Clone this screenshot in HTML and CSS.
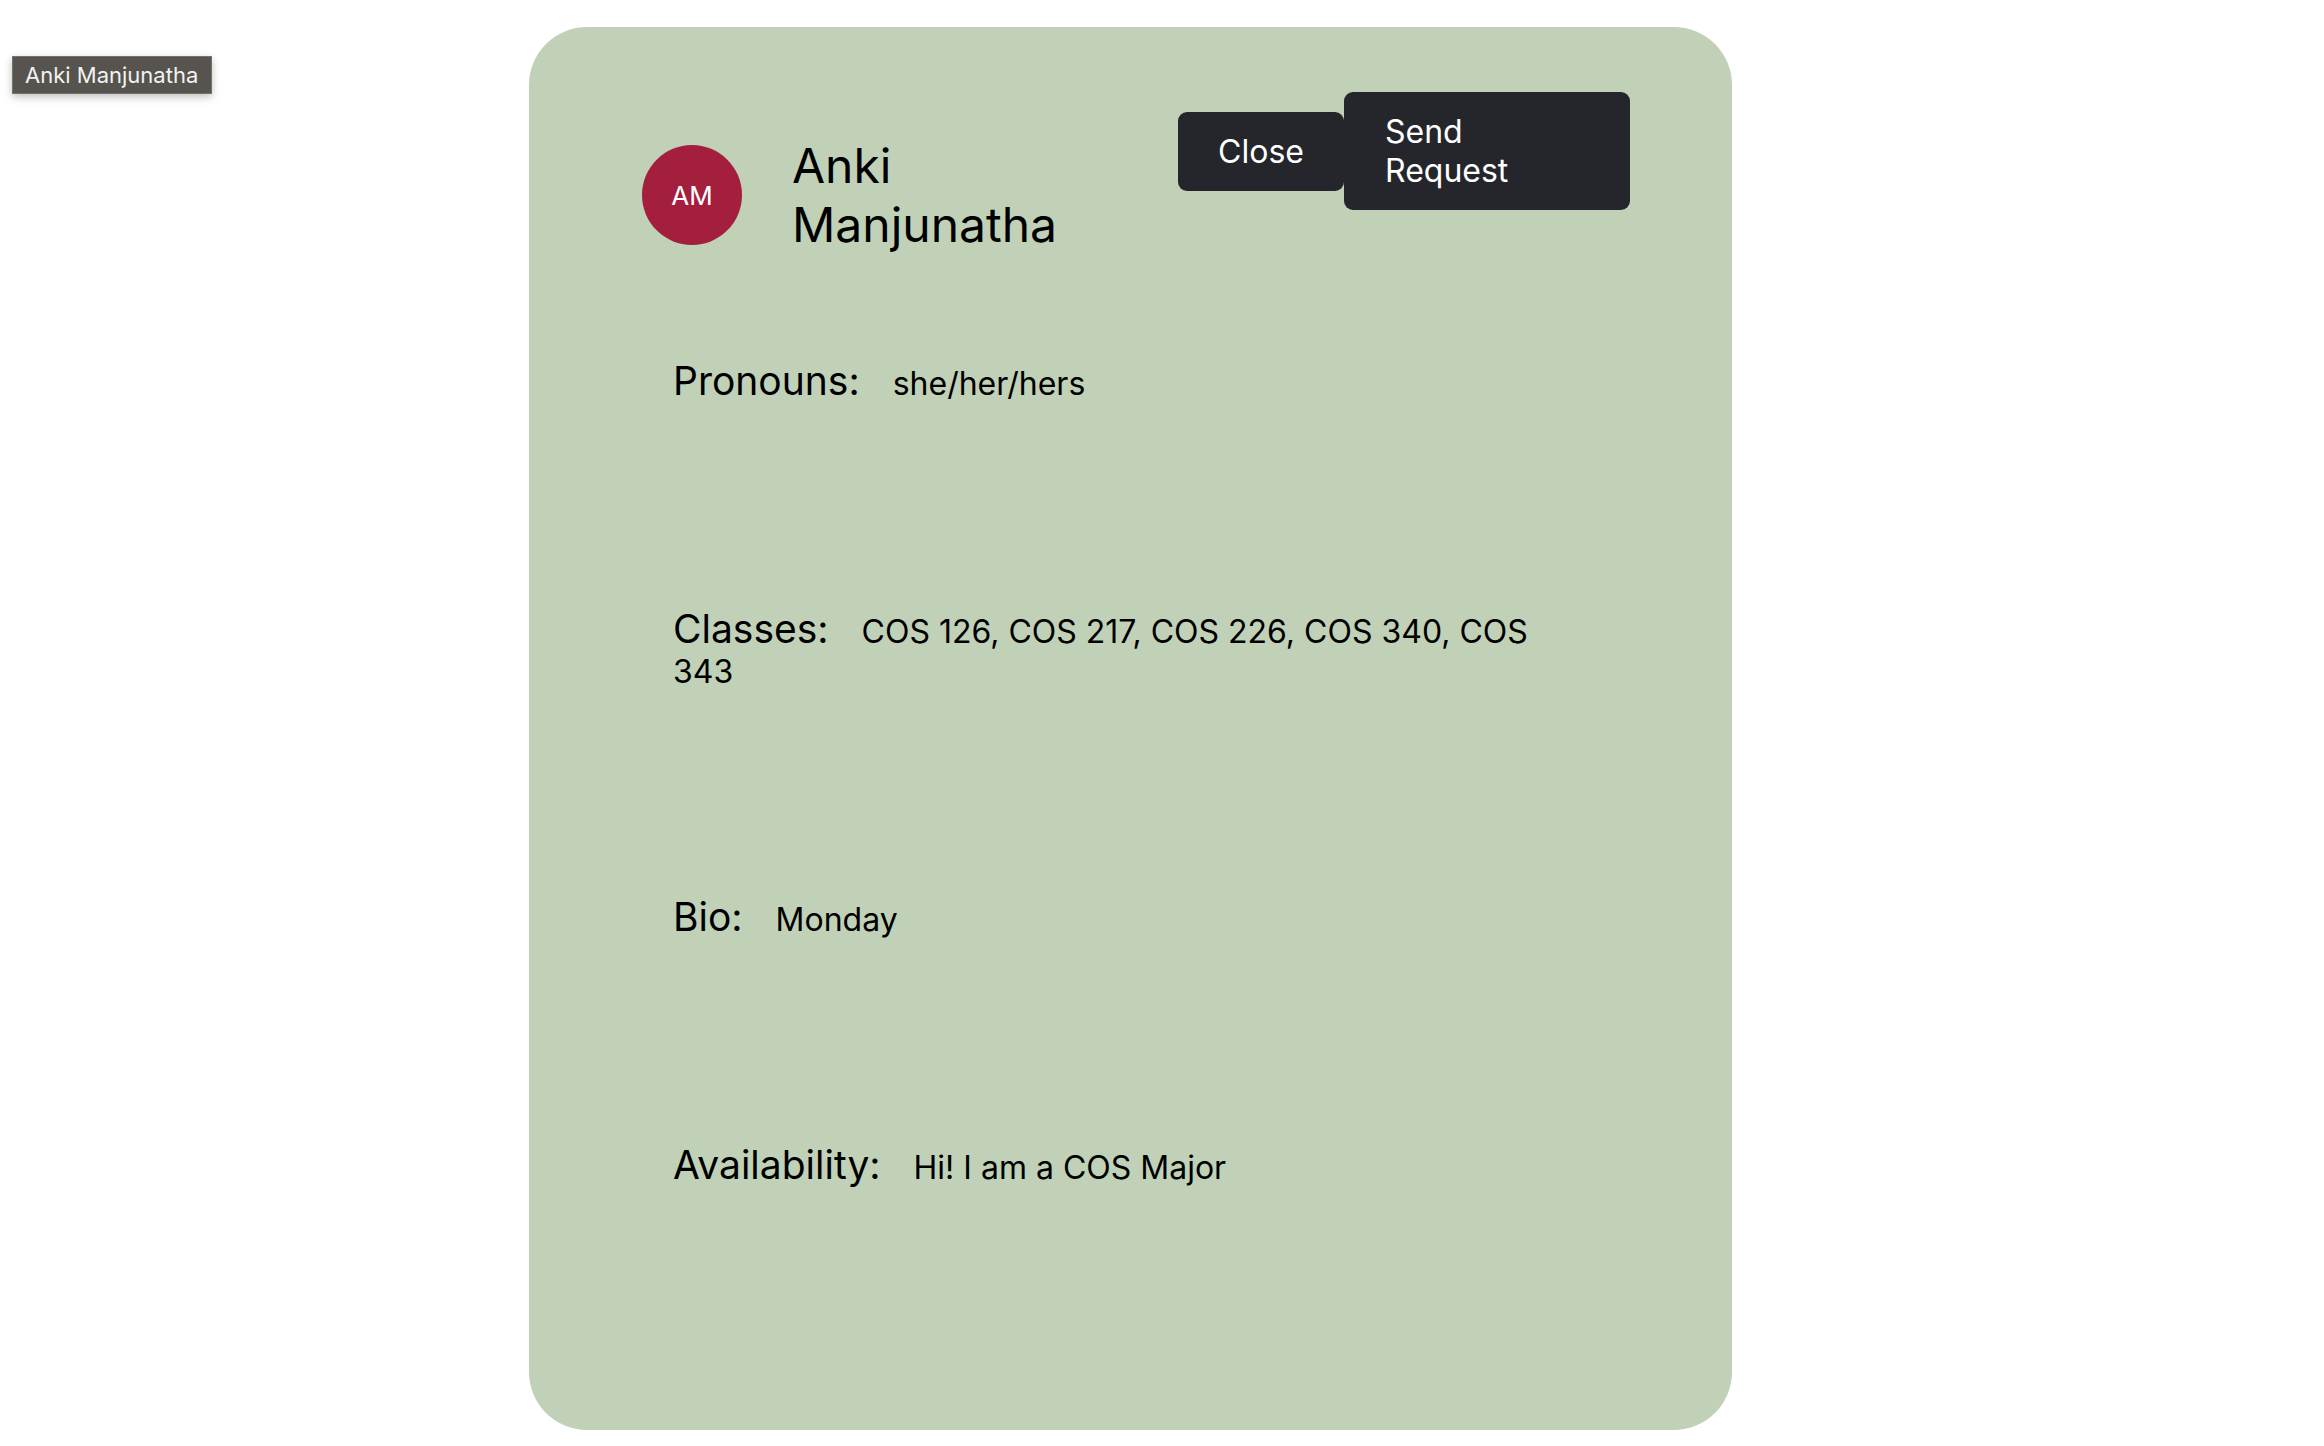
FILE: index.html
```html
<!DOCTYPE html>
<html lang="en">
<head>
<meta charset="utf-8">
<title>Profile</title>
<link rel="stylesheet" href="styles.css">
</head>
<body>
<div class="tooltip">Anki Manjunatha</div>
<div class="card">
  <div class="header">
    <div class="identity">
      <div class="avatar">AM</div>
      <div class="name">Anki Manjunatha</div>
    </div>
    <div class="actions">
      <button class="btn btn-close">Close</button>
      <button class="btn btn-send">Send Request</button>
    </div>
  </div>
  <div class="fields">
    <p class="field"><span class="label">Pronouns:</span> <span class="value">she/her/hers</span></p>
    <p class="field"><span class="label">Classes:</span> <span class="value">COS 126, COS 217, COS 226, COS 340, COS 343</span></p>
    <p class="field"><span class="label">Bio:</span> <span class="value">Monday</span></p>
    <p class="field"><span class="label">Availability:</span> <span class="value">Hi! I am a COS Major</span></p>
  </div>
</div>
</body>
</html>
```

FILE: styles.css
```css
html, body {
  margin: 0;
  padding: 0;
  background: #ffffff;
  font-family: Inter, "Noto Sans", "Liberation Sans", sans-serif;
  color: #000;
}

body {
  position: relative;
  padding-top: 27px;
}

.tooltip {
  position: absolute;
  left: 12px;
  top: 56px;
  width: 200px;
  height: 38px;
  box-sizing: border-box;
  background: #57534e;
  border: 1px solid #75716c;
  color: #f2f2f2;
  font-size: 22px;
  line-height: 36px;
  padding-left: 12px;
  box-shadow: 0 3px 8px rgba(0, 0, 0, 0.25);
  white-space: nowrap;
}

.card {
  margin-left: 529px;
  width: 1203px;
  height: 1403px;
  box-sizing: border-box;
  background: #c1d1b7;
  border-radius: 58px;
  padding: 65px 102px 0 113px;
}

.header {
  display: flex;
  align-items: flex-start;
}

.identity {
  display: flex;
  align-items: center;
  margin-top: 44px;
}

.avatar {
  width: 100px;
  height: 100px;
  border-radius: 50%;
  background: #a31f3d;
  color: #fff;
  display: flex;
  align-items: center;
  justify-content: center;
  font-size: 26px;
}

.name {
  margin-left: 50px;
  width: 300px;
  font-size: 48px;
  line-height: 59px;
}

.actions {
  margin-left: auto;
  display: flex;
  align-items: center;
}

.btn {
  font-family: inherit;
  font-size: 32px;
  line-height: 39px;
  color: #fff;
  background: #25262b;
  border: none;
  border-radius: 9px;
  text-align: left;
  cursor: pointer;
}

.btn-close {
  width: 166px;
  padding: 20px 40px;
  text-align: center;
}

.btn-send {
  width: 286px;
  padding: 20px 80px 20px 41px;
}

.fields {
  margin: 107px 55px 0 31px;
}

.field {
  margin: 0 0 205px 0;
  font-size: 32px;
  line-height: 40px;
}

.label {
  font-size: 39px;
  line-height: 40px;
  margin-right: 24px;
}
```
